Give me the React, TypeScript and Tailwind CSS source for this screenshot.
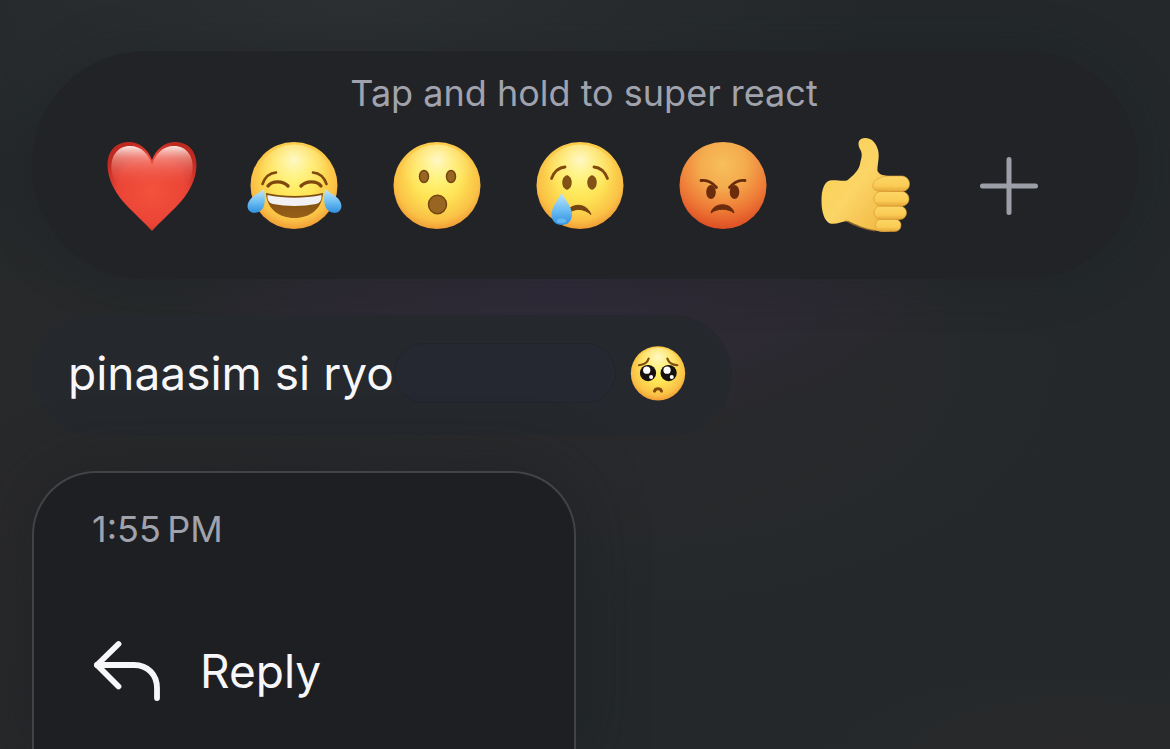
import React from 'react';

interface IconProps {
  className?: string;
}

// Shared gradients, referenced by id from every emoji
function EmojiDefs() {
  return (
    <svg className="absolute h-0 w-0" aria-hidden="true">
      <defs>
        <radialGradient id="face" cx="0.5" cy="0.42" r="0.6">
          <stop offset="0" stopColor="#fff05a" />
          <stop offset="0.45" stopColor="#fee254" />
          <stop offset="0.8" stopColor="#fac146" />
          <stop offset="1" stopColor="#ef9632" />
        </radialGradient>
        <radialGradient id="angry" cx="0.5" cy="0.26" r="0.76">
          <stop offset="0" stopColor="#f7bf5c" />
          <stop offset="0.35" stopColor="#f4ab4e" />
          <stop offset="0.7" stopColor="#ee7a36" />
          <stop offset="1" stopColor="#dc4a22" />
        </radialGradient>
        <radialGradient id="shine" cx="0.5" cy="0.2" r="0.5">
          <stop offset="0" stopColor="#fffbdc" stopOpacity="0.85" />
          <stop offset="0.5" stopColor="#fff8a8" stopOpacity="0.45" />
          <stop offset="1" stopColor="#fff38a" stopOpacity="0" />
        </radialGradient>
        <radialGradient id="heart" cx="0.5" cy="0.55" r="0.58">
          <stop offset="0" stopColor="#f4523d" />
          <stop offset="0.65" stopColor="#ea4436" />
          <stop offset="1" stopColor="#bf2a20" />
        </radialGradient>
        <linearGradient id="heartShine" x1="0" y1="0" x2="0" y2="1">
          <stop offset="0" stopColor="#fff4f0" stopOpacity="0.95" />
          <stop offset="0.3" stopColor="#f9aca2" stopOpacity="0.6" />
          <stop offset="0.8" stopColor="#f06a5a" stopOpacity="0.15" />
          <stop offset="1" stopColor="#ee5a48" stopOpacity="0" />
        </linearGradient>
        <linearGradient id="tear" x1="0" y1="0" x2="0" y2="1">
          <stop offset="0" stopColor="#c4e8fb" />
          <stop offset="0.55" stopColor="#6cbdf2" />
          <stop offset="1" stopColor="#2f8fe0" />
        </linearGradient>
        <linearGradient id="mouth" x1="0" y1="0" x2="0" y2="1">
          <stop offset="0" stopColor="#7a4a0e" />
          <stop offset="1" stopColor="#966018" />
        </linearGradient>
        <linearGradient id="hand" x1="0" y1="0" x2="1" y2="1">
          <stop offset="0" stopColor="#f9cf52" />
          <stop offset="0.5" stopColor="#fbd566" />
          <stop offset="1" stopColor="#efb03c" />
        </linearGradient>
        <linearGradient id="finger" x1="0" y1="0" x2="0" y2="1">
          <stop offset="0" stopColor="#fcd766" />
          <stop offset="0.65" stopColor="#facb54" />
          <stop offset="1" stopColor="#e5a639" />
        </linearGradient>
      </defs>
    </svg>
  );
}

function Face() {
  return (
    <>
      <circle cx="48" cy="48.5" r="43.5" fill="url(#face)" />
      <circle cx="48" cy="46.5" r="39" fill="url(#shine)" />
    </>
  );
}

function Heart({ className }: IconProps) {
  return (
    <svg viewBox="0 0 96 96" className={className}>
      <path
        d="M49 94 C44 88 35 80 26 71 C13 58 4.5 43 4.5 28 C4.5 14 13 5 26 5 C36 5 45 12 49 23 C53 12 62 5 72 5 C85 5 93.500 14 93.500 28 C93.500 43 85 58 72 71 C63 80 54 88 49 94 Z"
        fill="url(#heart)"
      />
      <path d="M9 36 C6 19 15 9 27 9 C38 9 46 17 49 28 V50 H16 C12 46 10 41 9 36 Z" fill="url(#heartShine)" />
      <path d="M89 36 C92 19 83 9 71 9 C60 9 52 17 49 28 V50 H82 C86 46 88 41 89 36 Z" fill="url(#heartShine)" />
    </svg>
  );
}

function Laugh({ className }: IconProps) {
  return (
    <svg viewBox="0 0 96 96" className={className} overflow="visible">
      <Face />
      <g fill="none" stroke="#80480f" strokeLinecap="round">
        <path d="M16.5 47 C19 40 24 36 30 35.5" strokeWidth="2.6" />
        <path d="M80.5 47 C78 40 73 36 67 35.5" strokeWidth="2.6" />
        <path d="M22 49 C26 43.5 37 43.5 42 49" strokeWidth="3.4" />
        <path d="M55 49 C60 43.5 71 43.5 75 49" strokeWidth="3.4" />
      </g>
      <path d="M20 56 C37 60 60 60 77 56 C76 72 64 81 48.5 81 C33 81 21 72 20 56 Z" fill="url(#mouth)" />
      <path d="M21.5 58 C38 61.5 59 61.5 75.5 58 C76 63 74 66 70 67 C57 69.5 40 69.5 27 67 C23 66 21 63 21.5 58 Z" fill="#f1f1f4" />
      <path d="M18 52 C19 60 19.5 66 17 71 C14 76 7 77.5 3.5 74 C0 70.5 1.5 65 5.5 61 C9 57.5 13.5 56 18 52 Z" fill="url(#tear)" />
      <path d="M79 52 C78 60 77.5 66 80 71 C83 76 90 77.5 93.5 74 C97 70.5 95.5 65 91.5 61 C88 57.5 83.5 56 79 52 Z" fill="url(#tear)" />
    </svg>
  );
}

function Surprised({ className }: IconProps) {
  return (
    <svg viewBox="0 0 96 96" className={className}>
      <Face />
      <g fill="#996523" stroke="#744710" strokeWidth="1.5">
        <ellipse cx="35" cy="39.5" rx="4.5" ry="6" />
        <ellipse cx="62" cy="39.5" rx="4.5" ry="6" />
        <ellipse cx="48.5" cy="67.5" rx="9" ry="9.2" />
      </g>
    </svg>
  );
}

function Crying({ className }: IconProps) {
  return (
    <svg viewBox="0 0 96 96" className={className}>
      <Face />
      <g fill="none" stroke="#80480f" strokeLinecap="round">
        <path d="M19.5 41.5 C22 35 27 30.5 33 30" strokeWidth="2.8" />
        <path d="M75.5 41.5 C73 35 68 30.5 62 30" strokeWidth="2.8" />
      </g>
      <g fill="#855216" stroke="#744710">
        <ellipse cx="35" cy="45.5" rx="4.2" ry="6.7" />
        <ellipse cx="60" cy="45.5" rx="4.2" ry="6.7" />
      </g>
      <path d="M37 72 C43 66 55 67 59 77.5 C52 71.5 44 71 38 75 Z" fill="#75450f" stroke="#75450f" strokeLinejoin="round" />
      <path d="M29.5 55 C32 62 40 69 40 77.5 C40 84 35.5 88 29.5 88 C24 88 19.5 84 19.5 77.5 C19.5 69 27.5 62 29.5 55 Z" fill="url(#tear)" />
      <ellipse cx="29.5" cy="84" rx="5" ry="2.5" fill="#7cc8f8" opacity="0.6" />
    </svg>
  );
}

function Angry({ className }: IconProps) {
  return (
    <svg viewBox="0 0 96 96" className={className}>
      <circle cx="48" cy="48.5" r="43.5" fill="url(#angry)" />
      <g fill="#6a2c0d">
        <ellipse cx="36" cy="55" rx="4.8" ry="7" />
        <ellipse cx="59.5" cy="55" rx="4.8" ry="7" />
        <path d="M36 76 C38 65 57 65 59 76 C53 71 42 71 36 76 Z" stroke="#6a2c0d" strokeLinejoin="round" />
      </g>
      <g fill="none" stroke="#6a2c0d" strokeWidth="2.8" strokeLinecap="round">
        <path d="M26 43.5 C32 42.5 37 45 41.5 50.5" />
        <path d="M70 43.5 C64 42.5 59 45 54.5 50.5" />
      </g>
    </svg>
  );
}

function ThumbsUp({ className }: IconProps) {
  return (
    <svg viewBox="0 0 96 96" className={className}>
      <path
        d="M12 43.5 C17 42.5 24 44.5 29 43.5 C35 39 41 33 42 27 C43 22 45 18 42.5 13 C40 9 39.5 4 43 2 C49 -0.5 57 2 60 13 C62 20 59 28 59.5 34 C62 39 67 38 70 39 L76 92 C70 96 62 95 56 93 C47 92 39 88 30 84 C24 84 18 88 12 86.5 C6 84 3.5 74 3.5 64 C3.5 53 6 45 12 43.5 Z"
        fill="url(#hand)"
      />
      <path d="M27 83 C36 88 46 92 57 93.5" fill="none" stroke="#dd9b31" strokeWidth="2" opacity="0.5" />
      <g fill="url(#finger)" stroke="#d99b33" strokeWidth="0.6">
        <rect x="57.5" y="82" width="25.500" height="12.5" rx="6.2" />
        <rect x="56" y="69" width="32.5" height="13.5" rx="6.7" />
        <rect x="56" y="54.5" width="35" height="14.7" rx="7.3" />
        <path d="M62 41 C66 38.5 72 39 84 39 C94 40 94 54 84 54.5 H64 C52 55 52 44 62 41 Z" />
      </g>
    </svg>
  );
}

function Pleading({ className }: IconProps) {
  return (
    <svg viewBox="0 0 96 96" className={className}>
      <Face />
      <g fill="none" stroke="#80480f" strokeWidth="3.4" strokeLinecap="round">
        <path d="M17.5 35.5 C25 35 31 31 33 25" />
        <path d="M79 35.5 C71 35 65 31 63 25" />
        <path d="M42.5 77 C44 72 52 72 53.5 77" strokeWidth="5" />
      </g>
      <g fill="#17120f">
        <circle cx="32" cy="48" r="13" />
        <circle cx="65" cy="48" r="13" />
      </g>
      <g fill="#fff">
        <circle cx="30" cy="43.5" r="5.8" />
        <circle cx="62.5" cy="43.5" r="5.8" />
        <circle cx="37" cy="54.5" r="3.2" />
        <circle cx="70" cy="54.5" r="3.2" />
      </g>
    </svg>
  );
}

function Plus({ className }: IconProps) {
  return (
    <svg viewBox="0 0 96 96" className={className} fill="none" stroke="#9c9fa8" strokeWidth="5" strokeLinecap="round">
      <path d="M48 22.5 V75.5 M21.5 49 H74.5" />
    </svg>
  );
}

function ReplyArrow({ className }: IconProps) {
  return (
    <svg
      viewBox="0 0 72 64"
      className={className}
      fill="none"
      stroke="#f7f7fa"
      strokeWidth="5.8"
      strokeLinecap="round"
      strokeLinejoin="round"
    >
      <path d="M26.5 5 L5 26 L26.500 47.5" />
      <path d="M5 26 H42 C56 26 65 36 65 49 V59" />
    </svg>
  );
}

const reactions = [
  { label: 'Love', Icon: Heart },
  { label: 'Haha', Icon: Laugh },
  { label: 'Wow', Icon: Surprised },
  { label: 'Sad', Icon: Crying },
  { label: 'Angry', Icon: Angry },
  { label: 'Like', Icon: ThumbsUp },
  { label: 'More reactions', Icon: Plus },
];

function ReactionBar() {
  return (
    <section className="rounded-[114px] bg-[#222326] pt-6 pr-[58px] pb-[46px] pl-12 shadow-[0_0_48px_rgba(28,33,36,0.4)]">
      <p className="pl-2 text-center text-4xl leading-9 text-[#a0a3ad]">Tap and hold to super react</p>
      <div className="mt-[26px] grid grid-cols-7 justify-items-center">
        {reactions.map(({ label, Icon }) => (
          <button key={label} type="button" aria-label={label}>
            <Icon className="block size-24" />
          </button>
        ))}
      </div>
    </section>
  );
}

function MessageBubble() {
  return (
    <div className="flex items-center self-start rounded-[60px] bg-[#25282c] pt-7 pr-11 pb-8 pl-9">
      <p className="text-[46px] leading-[60px] whitespace-nowrap text-[#f7f7fa]">pinaasim si ryo</p>
      {/* hidden name */}
      <span className="h-[60px] w-[222px] shrink-0 rounded-[30px] border border-[#212428] bg-[#252830]" />
      <Pleading className="ml-3 block size-15 shrink-0" />
    </div>
  );
}

function ContextMenu() {
  return (
    <section className="w-[544px] max-w-full flex-1 rounded-t-[64px] border-2 border-b-0 border-[#424347] bg-[#1e1f22] px-[58px] pt-[38px] shadow-[0_0_64px_rgba(28,30,33,0.5)]">
      <time className="block text-4xl leading-9 text-[#a0a3ad]">1:55{'\u202f'}PM</time>
      <button type="button" className="mt-[88px] flex h-[72px] items-center gap-9 text-[46px] text-[#f7f7fa]">
        <ReplyArrow className="h-16 w-[72px]" />
        <span>Reply</span>
      </button>
    </section>
  );
}

export default function App() {
  return (
    <main className="flex min-h-screen flex-col gap-9 overflow-hidden bg-[#24282a] bg-[radial-gradient(ellipse_34%_20%_at_48%_38%,#302a39_0%,#2e2a35_45%,transparent_100%),radial-gradient(ellipse_40%_36%_at_54%_48%,#2b2a2d_0%,transparent_100%),radial-gradient(ellipse_50%_60%_at_0%_70%,#29292a_0%,transparent_100%),radial-gradient(ellipse_45%_30%_at_30%_0%,#2d3033_0%,transparent_100%),radial-gradient(ellipse_24%_12%_at_92%_100%,#29292b_0%,transparent_100%)] px-8 pt-[51px] font-['Inter','Liberation_Sans',sans-serif]">
      <EmojiDefs />
      <ReactionBar />
      <MessageBubble />
      <ContextMenu />
    </main>
  );
}
